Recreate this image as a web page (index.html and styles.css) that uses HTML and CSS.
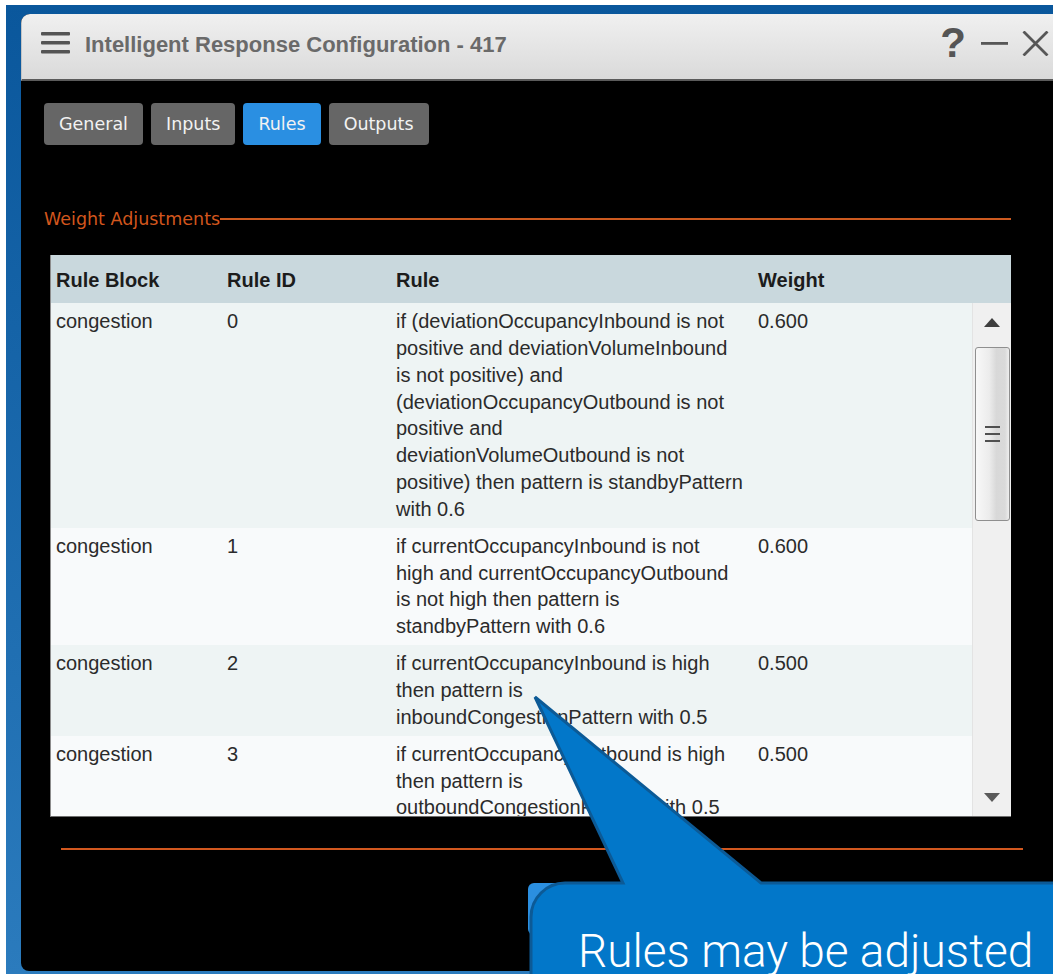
FILE: index.html
```html
<!DOCTYPE html>
<html lang="en">
<head>
<meta charset="utf-8">
<title>Intelligent Response Configuration - 417</title>
<link rel="stylesheet" href="styles.css">
</head>
<body>
<div class="desktop">
  <div class="window">
    <header class="titlebar">
      <svg class="menu-icon" width="29" height="22" viewBox="0 0 29 22" aria-hidden="true">
        <rect x="0" y="0" width="29" height="3.6" rx="1" fill="#545454"/>
        <rect x="0" y="9" width="29" height="3.6" rx="1" fill="#545454"/>
        <rect x="0" y="18" width="29" height="3.6" rx="1" fill="#545454"/>
      </svg>
      <h1 class="title">Intelligent Response Configuration - 417</h1>
      <div class="controls">
        <span class="help">?</span>
        <svg class="ctrl-min" width="27" height="25" viewBox="0 0 27 25" aria-hidden="true">
          <rect x="0" y="11" width="27" height="2.8" fill="#575757"/>
        </svg>
        <svg class="ctrl-close" width="27" height="25" viewBox="0 0 27 25" aria-hidden="true">
          <path d="M1.5 0.5 L25.5 24.5 M25.5 0.5 L1.5 24.5" stroke="#575757" stroke-width="2.8" fill="none"/>
        </svg>
      </div>
    </header>

    <main class="content">
      <nav class="tabs">
        <button class="tab">General</button>
        <button class="tab">Inputs</button>
        <button class="tab is-active">Rules</button>
        <button class="tab">Outputs</button>
      </nav>

      <section class="panel">
        <div class="legend"><span>Weight Adjustments</span><i class="legend-rule"></i></div>

        <div class="grid">
          <div class="grid-head">
            <div>Rule Block</div>
            <div>Rule ID</div>
            <div>Rule</div>
            <div>Weight</div>
          </div>
          <div class="grid-body">
            <div class="rows">
              <div class="row">
                <div>congestion</div>
                <div>0</div>
                <div>if (deviationOccupancyInbound is not<br>positive and deviationVolumeInbound<br>is not positive) and<br>(deviationOccupancyOutbound is not<br>positive and<br>deviationVolumeOutbound is not<br>positive) then pattern is standbyPattern<br>with 0.6</div>
                <div>0.600</div>
              </div>
              <div class="row">
                <div>congestion</div>
                <div>1</div>
                <div>if currentOccupancyInbound is not<br>high and currentOccupancyOutbound<br>is not high then pattern is<br>standbyPattern with 0.6</div>
                <div>0.600</div>
              </div>
              <div class="row">
                <div>congestion</div>
                <div>2</div>
                <div>if currentOccupancyInbound is high<br>then pattern is<br>inboundCongestionPattern with 0.5</div>
                <div>0.500</div>
              </div>
              <div class="row">
                <div>congestion</div>
                <div>3</div>
                <div>if currentOccupancyOutbound is high<br>then pattern is<br>outboundCongestionPattern with 0.5</div>
                <div>0.500</div>
              </div>
            </div>
            <div class="scrollbar">
              <svg width="16" height="9" viewBox="0 0 16 9" aria-hidden="true"><polygon points="0,9 8,0 16,9" fill="#3e3e3e"/></svg>
              <div class="thumb">
                <i class="grip"></i><i class="grip"></i><i class="grip"></i>
              </div>
              <svg class="arrow-down" width="16" height="9" viewBox="0 0 16 9" aria-hidden="true"><polygon points="0,0 16,0 8,9" fill="#5a5a5a"/></svg>
            </div>
          </div>
        </div>
      </section>

      <footer class="actions">
        <button class="btn-primary">Save</button>
      </footer>
    </main>
  </div>
</div>

<div class="callout">
  <svg class="callout-shape" width="1053" height="974" viewBox="0 0 1053 974" aria-hidden="true">
    <path d="M535 697 L623 883 L565 883 A34 34 0 0 0 531 917 L531 1010 L1100 1010 L1100 883 L761 883 Z"
          fill="#0277c9" stroke="#0c5a96" stroke-width="3" stroke-linejoin="miter"/>
  </svg>
  <p class="callout-text">Rules may be adjusted</p>
</div>
</body>
</html>
```

FILE: styles.css
```css
* {
  box-sizing: border-box;
}

html,
body {
  margin: 0;
}

body {
  position: relative;
  width: 1053px;
  height: 974px;
  padding: 5px 0 0 6px;
  overflow: hidden;
  background: #ffffff;
  font-family: "Liberation Sans", Arial, sans-serif;
}

/* blue desktop behind the window */
.desktop {
  height: 969px;
  padding: 9px 0 0 15px;
  background: linear-gradient(#0a579c, #2b7bbd);
  overflow: hidden;
}

.window {
  width: 1060px;
  height: 957px;
  display: flex;
  flex-direction: column;
  border-radius: 9px 9px 0 8px;
  overflow: hidden;
  background: #000000;
}

/* title bar */
.titlebar {
  flex: none;
  height: 67px;
  display: flex;
  align-items: flex-start;
  padding: 0 32px 0 19px;
  background: linear-gradient(#f0f0f0, #dadada);
  border-left: 1px solid #c4c4c4;
  border-bottom: 2px solid #5b5b5b;
}

.menu-icon {
  flex: none;
  margin-top: 18px;
}

.title {
  margin: 18px 0 0 15px;
  font: bold 22px/26px "Liberation Sans", Arial, sans-serif;
  color: #6a6a6a;
  white-space: nowrap;
}

.controls {
  margin-left: auto;
  height: 65px;
  padding-bottom: 7px;
  display: flex;
  align-items: center;
}

.help {
  font: bold 42px/1 "Liberation Sans", Arial, sans-serif;
  color: #555555;
}

.ctrl-min {
  margin-left: 15px;
}

.ctrl-close {
  margin-left: 14px;
}

/* window body */
.content {
  flex: 1;
  padding: 22px 0 0 23px;
}

.tabs {
  display: flex;
  gap: 8px;
  height: 42px;
}

.tab {
  height: 42px;
  padding: 0 15px;
  border: none;
  border-radius: 4px;
  background: #666666;
  color: #f2f2f2;
  font: 17.5px/42px "DejaVu Sans", Verdana, sans-serif;
}

.tab.is-active {
  background: #2a8fe2;
}

.panel {
  width: 967px;
  margin-top: 64px;
}

.legend {
  display: flex;
  align-items: center;
  height: 20px;
  font: 17.5px/20px "DejaVu Sans", Verdana, sans-serif;
  color: #d2561d;
  white-space: nowrap;
}

.legend-rule {
  flex: 1;
  height: 2px;
  background: #cc5a20;
}

/* rules grid */
.grid {
  width: 961px;
  margin: 26px 0 0 6px;
  border-left: 1px solid #8c8c8c;
  border-bottom: 1px solid #6e6e6e;
  font-size: 20px;
  line-height: 26.85px;
}

.grid-head,
.row {
  display: grid;
  grid-template-columns: 171px 169px 362px 1fr;
}

.grid-head {
  height: 48px;
  background: #c9d8dd;
  color: #1c1c1c;
  font-weight: bold;
}

.grid-head > div {
  padding: 12px 0 0 5px;
}

.grid-body {
  display: flex;
  height: 513px;
  overflow: hidden;
}

.rows {
  flex: none;
  width: 921px;
}

.row {
  padding: 5px 0;
  color: #2b2b2b;
  white-space: nowrap;
}

.row > div {
  padding-left: 5px;
}

.row:nth-child(odd) {
  background: #eef4f4;
}

.row:nth-child(even) {
  background: #f8fafb;
}

/* drawn scrollbar */
.scrollbar {
  flex: none;
  width: 39px;
  display: flex;
  flex-direction: column;
  align-items: center;
  padding: 15px 0 14px;
  background: #f0f0f0;
  border-left: 1px solid #e3e3e3;
}

.thumb {
  width: 35px;
  height: 174px;
  margin-top: 20px;
  display: flex;
  flex-direction: column;
  align-items: center;
  justify-content: center;
  gap: 5px;
  border: 1px solid #8f8f8f;
  border-radius: 3px;
  background: linear-gradient(to right, #f8f8f8, #ececec 40%, #d8d8d8 62%, #dadada 88%, #eeeeee);
}

.grip {
  width: 15px;
  height: 2px;
  background: #505050;
}

.arrow-down {
  margin-top: auto;
}

/* footer */
.actions {
  width: 962px;
  margin: 31px 0 0 17px;
  padding: 33px 0 0 467px;
  border-top: 2px solid #d2581f;
}

.btn-primary {
  width: 230px;
  height: 52px;
  border: none;
  border-radius: 6px;
  background: #2b8fe0;
  color: #ffffff;
  font: 18px "DejaVu Sans", Verdana, sans-serif;
}

/* speech bubble over the page */
.callout {
  position: absolute;
  inset: 0;
  pointer-events: none;
}

.callout-shape {
  position: absolute;
  left: 0;
  top: 0;
}

.callout-text {
  position: absolute;
  left: 578px;
  top: 928px;
  margin: 0;
  font: 300 46px/1 Roboto, "Open Sans", sans-serif;
  color: #ffffff;
  white-space: nowrap;
}
```
